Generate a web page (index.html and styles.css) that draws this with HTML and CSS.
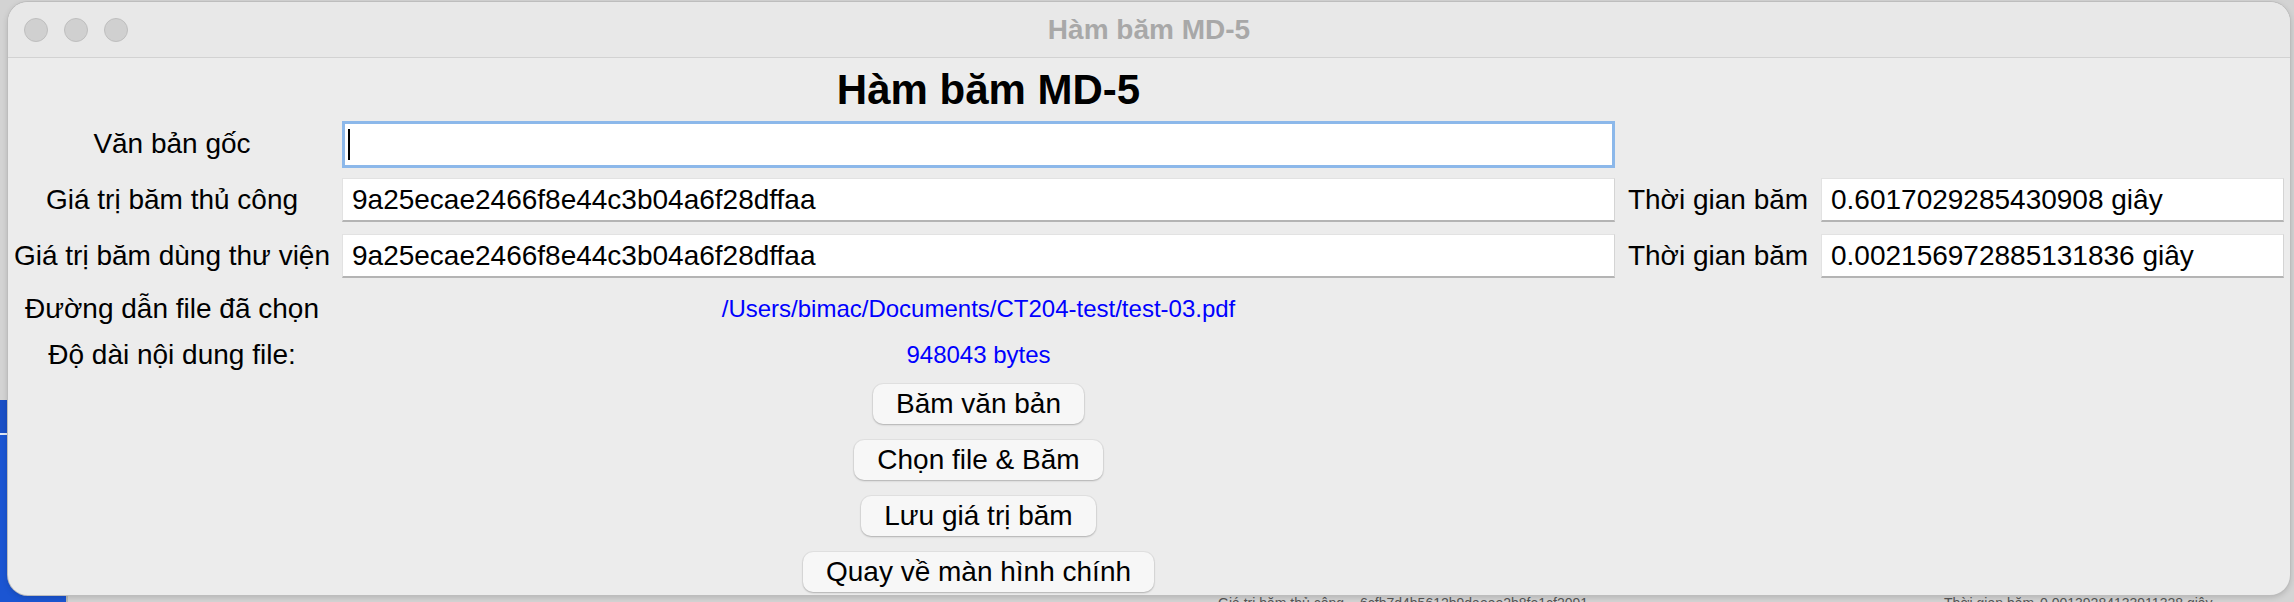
FILE: index.html
```html
<!DOCTYPE html>
<html lang="vi">
<head>
<meta charset="utf-8">
<title>Hàm băm MD-5</title>
<link rel="stylesheet" href="styles.css">
</head>
<body>
<div class="desk-blue"><span class="desk-blue-band"></span><span class="desk-blue-line"></span></div>
<div class="desk-back">
  <span class="db-l1">Giá trị băm thủ công</span>
  <span class="db-v1">6cfb7d4b5612b9daeae2b8fe1cf2091</span>
  <span class="db-l2">Thời gian băm</span>
  <span class="db-v2">0.00139284133911328 giây</span>
</div>
<div class="window">
  <div class="titlebar">
    <div class="lights"><span class="light"></span><span class="light"></span><span class="light"></span></div>
    <div class="title">Hàm băm MD-5</div>
  </div>
  <div class="form">
    <h1 class="heading">Hàm băm MD-5</h1>

    <div class="label r1">Văn bản gốc</div>
    <div class="entry focus r1 c1"><span class="caret"></span></div>

    <div class="label r2">Giá trị băm thủ công</div>
    <div class="entry r2 c1">9a25ecae2466f8e44c3b04a6f28dffaa</div>
    <div class="label2 r2">Thời gian băm</div>
    <div class="entry r2 c3">0.6017029285430908 giây</div>

    <div class="label r3">Giá trị băm dùng thư viện</div>
    <div class="entry r3 c1">9a25ecae2466f8e44c3b04a6f28dffaa</div>
    <div class="label2 r3">Thời gian băm</div>
    <div class="entry r3 c3">0.002156972885131836 giây</div>

    <div class="label r4">Đường dẫn file đã chọn</div>
    <div class="info r4">/Users/bimac/Documents/CT204-test/test-03.pdf</div>

    <div class="label r5">Độ dài nội dung file:</div>
    <div class="info r5">948043 bytes</div>

    <button class="btn b1">Băm văn bản</button>
    <button class="btn b2">Chọn file &amp; Băm</button>
    <button class="btn b3">Lưu giá trị băm</button>
    <button class="btn b4">Quay về màn hình chính</button>
  </div>
</div>
</body>
</html>
```

FILE: styles.css
```css
* { box-sizing: border-box; }

html, body {
  margin: 0;
  padding: 0;
}

body {
  width: 2294px;
  height: 602px;
  overflow: hidden;
  position: relative;
  background: #d3d3d3;
  font-family: "Liberation Sans", Arial, Helvetica, sans-serif;
  padding-top: 2px;
  padding-left: 8px;
}

/* desktop pieces behind the window */
.desk-blue {
  position: absolute;
  left: 0;
  top: 400px;
  width: 66px;
  height: 202px;
  background: #1b55d2;
}
.desk-blue-band {
  position: absolute;
  left: 0;
  top: 0;
  width: 66px;
  height: 33px;
  background: #1a4fc6;
}
.desk-blue-line {
  position: absolute;
  left: 0;
  top: 33px;
  width: 66px;
  height: 2px;
  background: #dfe6f5;
}

.desk-back {
  position: absolute;
  left: 66px;
  top: 560px;
  width: 2228px;
  height: 42px;
  background: #d4d4d4;
  border-left: 2px solid #b9b9b9;
  font-size: 14px;
  line-height: 16px;
  color: #555;
}
.desk-back span {
  position: absolute;
  top: 35px;
  white-space: nowrap;
}
.db-l1 { left: 1150px; }
.db-v1 { left: 1292px; }
.db-l2 { left: 1876px; }
.db-v2 { left: 1972px; }

/* window */
.window {
  position: relative;
  z-index: 1;
  width: 2282px;
  height: 593px;
  background: #ececec;
  border-radius: 20px;
  overflow: hidden;
  box-shadow: 0 0 0 1px #bdbdbd, 0 2px 6px rgba(0,0,0,0.18);
}

.titlebar {
  height: 56px;
  background: #e8e8e8;
  border-bottom: 1px solid #d2d2d2;
  position: relative;
  display: flex;
  align-items: center;
  justify-content: center;
}

.lights {
  position: absolute;
  left: 16px;
  top: 16px;
  display: flex;
  gap: 16px;
}
.light {
  width: 24px;
  height: 24px;
  border-radius: 50%;
  background: #d0d0d0;
  border: 1px solid #bebebe;
}

.title {
  font-size: 28px;
  font-weight: bold;
  color: #a8a8a8;
  margin-top: 1px;
}

/* form grid */
.form {
  display: grid;
  grid-template-columns: 334px 1273px 206px 463px;
  grid-template-rows: 58px 56px 56px 56px 50px 42px 56px 56px 56px 56px;
  color: #000;
  font-size: 28px;
}

.heading {
  grid-column: 2;
  grid-row: 1;
  margin: 0 0 0 20px;
  padding-top: 6px;
  align-self: center;
  justify-self: center;
  font-size: 42px;
  font-weight: bold;
}

.r1 { grid-row: 2; }
.r2 { grid-row: 3; }
.r3 { grid-row: 4; }
.r4 { grid-row: 5; }
.r5 { grid-row: 6; }
.c1 { grid-column: 2; }
.c3 { grid-column: 4; }

.label {
  grid-column: 1;
  align-self: center;
  text-align: center;
  padding-right: 6px;
  white-space: nowrap;
}

.label2 {
  grid-column: 3;
  align-self: center;
  text-align: center;
  white-space: nowrap;
}

.entry {
  align-self: center;
  height: 44px;
  background: #fff;
  border: 1px solid #e2e2e2;
  border-bottom: 2px solid #b4b4b4;
  border-right-color: #d4d4d4;
  display: flex;
  align-items: center;
  padding-left: 9px;
  white-space: nowrap;
  overflow: hidden;
}

.entry.focus {
  height: 47px;
  border: 3px solid #8cb8ea;
  padding-left: 3px;
}

.caret {
  width: 2px;
  height: 31px;
  background: #000;
}

.info {
  grid-column: 2;
  align-self: center;
  justify-self: center;
  color: #0000ff;
  font-size: 24px;
}

.btn {
  grid-column: 2;
  justify-self: center;
  align-self: center;
  height: 40px;
  padding: 0 23px;
  border: none;
  border-radius: 10px;
  background: #f7f7f7;
  box-shadow: 0 1px 2px rgba(0,0,0,0.22), 0 0 0 1px rgba(0,0,0,0.04);
  font-family: inherit;
  font-size: 28px;
  color: #000;
  line-height: 40px;
}
.b1 { grid-row: 7; }
.b2 { grid-row: 8; }
.b3 { grid-row: 9; }
.b4 { grid-row: 10; }
```
